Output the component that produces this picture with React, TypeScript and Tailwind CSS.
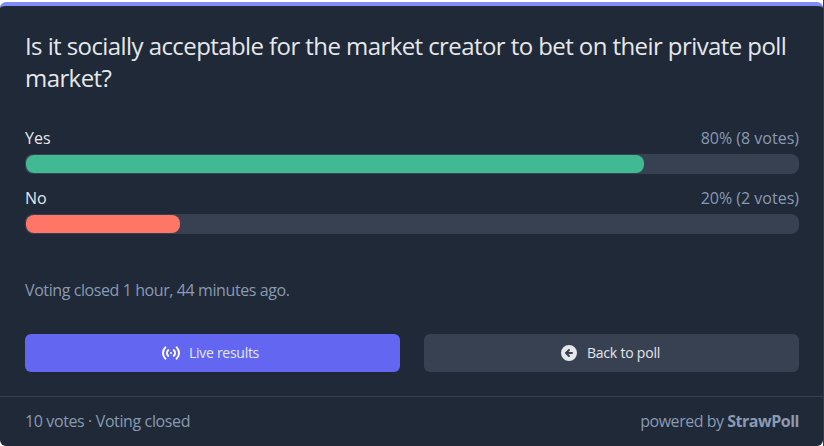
import { HiStatusOnline, HiArrowCircleLeft } from 'react-icons/hi'

const options = [
  { label: 'Yes', percent: 80, votes: 8, color: 'bg-[#41b993]' },
  { label: 'No', percent: 20, votes: 2, color: 'bg-[#ff7666]' },
]

export default function App() {
  return (
    <main className="h-[446px] w-[824px] overflow-hidden border-r border-[#3a3c40] bg-white pt-0.5 font-['Open_Sans',sans-serif] text-[#8a9ab3]">
      <div className="flex h-[444px] flex-col overflow-hidden rounded-md border-t-4 border-[#818cf8] bg-[#1f2937]">
        <div className="pt-6 pr-6 pl-[25px]">
          <h1 className="text-2xl tracking-[-0.58px] text-[#e5e7eb]">
            Is it socially acceptable for the market creator to bet on their private poll market?
          </h1>

          <div className="mt-8 flex flex-col gap-3">
            {options.map((option) => (
              <div key={option.label}>
                <div className="mb-1 flex justify-between">
                  <span className="text-[#e5e7eb]">{option.label}</span>
                  <span>{option.percent}% ({option.votes} votes)</span>
                </div>
                <div className="h-5 rounded-lg bg-[#374151] p-px">
                  <div className={`h-[18px] rounded-lg ${option.color}`} style={{ width: `${option.percent}%` }} />
                </div>
              </div>
            ))}
          </div>

          <p className="mt-11 tracking-[-0.41px]">Voting closed 1 hour, 44 minutes ago.</p>

          <div className="mt-8 grid grid-cols-2 gap-6 text-sm text-[#e5e7eb]">
            <button className="flex h-[38px] items-center justify-center gap-2 rounded-md bg-[#6366f1] pr-[5px] tracking-[-0.28px]">
              <HiStatusOnline className="size-5 text-white" />
              Live results
            </button>
            <button className="flex h-[38px] items-center justify-center gap-2 rounded-md bg-[#374151] pr-1 tracking-[-0.2px]">
              <HiArrowCircleLeft className="size-5" />
              Back to poll
            </button>
          </div>
        </div>

        <footer className="mt-6 flex justify-between border-t border-[#374151] py-3 pr-6 pl-[25px] tracking-[-0.38px]">
          <span>10 votes · Voting closed</span>
          <span className="tracking-[-0.48px]">powered by <b>StrawPoll</b></span>
        </footer>
      </div>
    </main>
  )
}
